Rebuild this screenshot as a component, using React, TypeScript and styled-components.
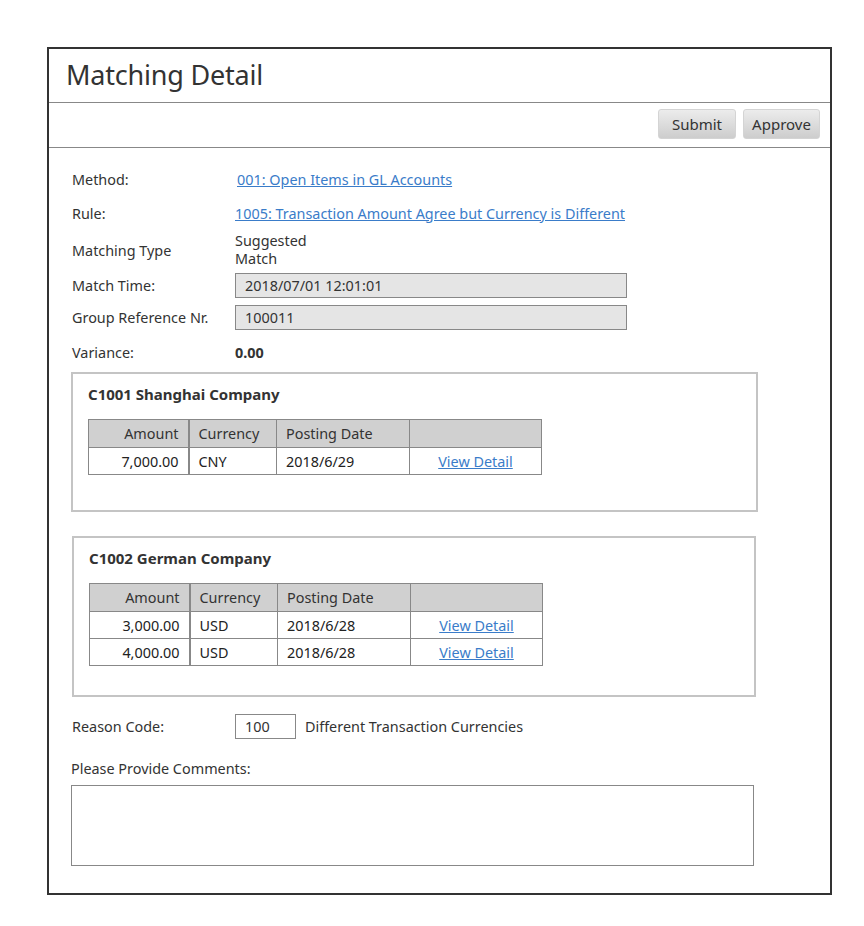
import React from "react";
import styled, { createGlobalStyle } from "styled-components";

const Global = createGlobalStyle`
  html, body { margin: 0; padding: 0; background: #fff; }
  body { font-family: "Noto Sans", "Open Sans", sans-serif; color: #333; font-size: 14.4px; }
  * { box-sizing: border-box; }
`;

const Page = styled.div`
  padding: 47px 0 0 47px;
`;

const Frame = styled.div`
  width: 785px;
  height: 848px;
  border: 2px solid #333;
  display: flex;
  flex-direction: column;
`;

const Header = styled.div`
  height: 54px;
  border-bottom: 1px solid #888;
  display: flex;
  align-items: center;
  padding-left: 17px;
`;

const Title = styled.h1`
  margin: 0;
  font-weight: 400;
  font-size: 27px;
  color: #333;
  letter-spacing: -0.2px;
  position: relative;
  top: -1px;
`;

const Toolbar = styled.div`
  height: 45px;
  border-bottom: 1px solid #888;
  display: flex;
  justify-content: flex-end;
  align-items: flex-start;
  gap: 7px;
  padding: 6px 10px 0 0;
`;

const Button = styled.button<{ $w: number }>`
  width: ${(p) => p.$w}px;
  height: 30px;
  border: 1px solid #d4d4d4;
  border-radius: 3px;
  background: linear-gradient(#ececec, #cdcdcd);
  font-family: inherit;
  font-size: 15px;
  color: #333;
  padding: 0;
`;

const Content = styled.div`
  padding: 14px 0 0 22px;
  display: flex;
  flex-direction: column;
`;

const Row = styled.div<{ $h: number }>`
  height: ${(p) => p.$h}px;
  display: grid;
  grid-template-columns: 164px 1fr;
  align-items: center;
`;

const Label = styled.span`
  font-size: 14.4px;
  color: #333;
  padding-left: 1px;
`;

const Link = styled.a<{ $pl?: number }>`
  color: #3a7cc9;
  text-decoration: underline;
  font-size: 14.4px;
  padding-left: ${(p) => p.$pl ?? 0}px;
  cursor: pointer;
`;

const MultiLine = styled.span`
  font-size: 14.4px;
  line-height: 18px;
  color: #333;
`;

const Field = styled.div<{ $w: number }>`
  width: ${(p) => p.$w}px;
  height: 25px;
  background: #e5e5e5;
  border: 1px solid #888;
  display: flex;
  align-items: center;
  padding-left: 9px;
  font-size: 14.4px;
  color: #333;
`;

const Bold = styled.span`
  font-weight: 700;
  font-size: 14.4px;
  color: #333;
`;

const CompanyBox = styled.div<{ $w: number; $h: number; $ml: number; $mt: number }>`
  width: ${(p) => p.$w}px;
  height: ${(p) => p.$h}px;
  margin-left: ${(p) => p.$ml}px;
  margin-top: ${(p) => p.$mt}px;
  border: 2px solid #c4c4c4;
  padding: 10px 0 0 15px;
  flex-shrink: 0;
`;

const CompanyTitle = styled.div`
  font-weight: 700;
  font-size: 15px;
  color: #333;
  height: 20px;
  line-height: 20px;
  margin-bottom: 15px;
`;

const Table = styled.table`
  border-collapse: collapse;
  font-size: 14.4px;
  color: #222;
`;

const Th = styled.th<{ $w: number; $align?: string; $thick?: boolean }>`
  width: ${(p) => p.$w}px;
  height: 28px;
  background: #d0d0d0;
  border: 1px solid #888;
  border-right-width: ${(p) => (p.$thick ? 2 : 1)}px;
  font-weight: 400;
  color: #333;
  text-align: ${(p) => p.$align ?? "left"};
  padding: 0 9px;
`;

const Td = styled.td<{ $align?: string; $thick?: boolean }>`
  height: 27px;
  border: 1px solid #888;
  border-right-width: ${(p) => (p.$thick ? 2 : 1)}px;
  text-align: ${(p) => p.$align ?? "left"};
  padding: 0 9px;
  color: #222;
`;

const ReasonRow = styled.div`
  display: grid;
  grid-template-columns: 164px auto 1fr;
  align-items: center;
  margin-top: 17px;
  height: 25px;
`;

const CodeBox = styled.div`
  width: 61px;
  height: 25px;
  border: 1px solid #888;
  display: flex;
  align-items: center;
  padding-left: 9px;
  font-size: 14.4px;
  color: #333;
  margin-right: 9px;
`;

const Plain = styled.span`
  font-size: 14.4px;
  color: #333;
`;

const CommentsLabel = styled.div`
  margin-top: 20px;
  height: 20px;
  line-height: 20px;
  font-size: 14.4px;
  color: #333;
`;

const CommentArea = styled.div`
  margin-top: 6px;
  width: 683px;
  height: 81px;
  border: 1px solid #888;
  flex-shrink: 0;
`;

type Line = { amount: string; currency: string; date: string };

const CompanyTable = ({ rows }: { rows: Line[] }) => (
  <Table>
    <thead>
      <tr>
        <Th $w={100} $align="right" $thick>Amount</Th>
        <Th $w={88}>Currency</Th>
        <Th $w={133}>Posting Date</Th>
        <Th $w={132}></Th>
      </tr>
    </thead>
    <tbody>
      {rows.map((r, i) => (
        <tr key={i}>
          <Td $align="right" $thick>{r.amount}</Td>
          <Td>{r.currency}</Td>
          <Td>{r.date}</Td>
          <Td $align="center"><Link>View Detail</Link></Td>
        </tr>
      ))}
    </tbody>
  </Table>
);

export default function App() {
  return (
    <>
      <Global />
      <Page>
        <Frame>
          <Header>
            <Title>Matching Detail</Title>
          </Header>
          <Toolbar>
            <Button $w={78}>Submit</Button>
            <Button $w={77}>Approve</Button>
          </Toolbar>
          <Content>
            <Row $h={34}>
              <Label>Method:</Label>
              <Link $pl={2}>001: Open Items in GL Accounts</Link>
            </Row>
            <Row $h={34}>
              <Label>Rule:</Label>
              <span><Link>1005: Transaction Amount Agree but Currency is Different</Link></span>
            </Row>
            <Row $h={40}>
              <Label>Matching Type</Label>
              <MultiLine>Suggested<br />Match</MultiLine>
            </Row>
            <Row $h={31}>
              <Label>Match Time:</Label>
              <Field $w={392}>2018/07/01 12:01:01</Field>
            </Row>
            <Row $h={32}>
              <Label>Group Reference Nr.</Label>
              <Field $w={392}>100011</Field>
            </Row>
            <Row $h={38}>
              <Label>Variance:</Label>
              <Bold>0.00</Bold>
            </Row>
            <CompanyBox $w={687} $h={140} $ml={0} $mt={1}>
              <CompanyTitle>C1001 Shanghai Company</CompanyTitle>
              <CompanyTable rows={[{ amount: "7,000.00", currency: "CNY", date: "2018/6/29" }]} />
            </CompanyBox>
            <CompanyBox $w={684} $h={161} $ml={1} $mt={24}>
              <CompanyTitle>C1002 German Company</CompanyTitle>
              <CompanyTable
                rows={[
                  { amount: "3,000.00", currency: "USD", date: "2018/6/28" },
                  { amount: "4,000.00", currency: "USD", date: "2018/6/28" },
                ]}
              />
            </CompanyBox>
            <ReasonRow>
              <Label>Reason Code:</Label>
              <CodeBox>100</CodeBox>
              <Plain>Different Transaction Currencies</Plain>
            </ReasonRow>
            <CommentsLabel>Please Provide Comments:</CommentsLabel>
            <CommentArea />
          </Content>
        </Frame>
      </Page>
    </>
  );
}
